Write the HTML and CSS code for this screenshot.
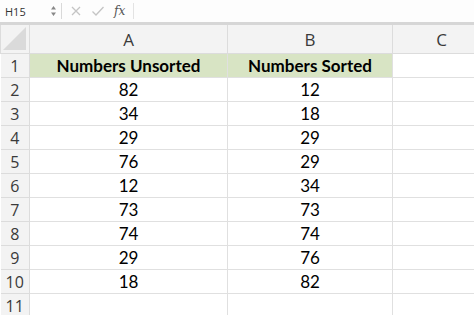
FILE: index.html
```html
<!DOCTYPE html>
<html lang="en">
<head>
  <meta charset="UTF-8" />
  <title>Numbers Sorted</title>
  <link rel="stylesheet" href="styles.css">
</head>
<body>
  <!-- Formula bar -->
  <div class="formula-bar">
    <div class="name-box">
      <span class="cell-ref">H15</span>
      <span class="spinner">
        <svg width="7" height="12" viewBox="0 0 7 12"><path d="M3.5 1 L6 4.5 H1 Z M3.5 11 L6 7.5 H1 Z" fill="#888"/></svg>
      </span>
    </div>
    <div class="fx-tools">
      <svg width="12" height="12" viewBox="0 0 12 12"><path d="M2 2 L10 10 M10 2 L2 10" stroke="#c4c4c4" stroke-width="1.3"/></svg>
      <svg width="14" height="12" viewBox="0 0 14 12"><path d="M1.5 6.5 L5 10 L12.5 2" stroke="#c4c4c4" stroke-width="1.3" fill="none"/></svg>
      <span class="fx">fx</span>
    </div>
    <div class="formula-input"></div>
  </div>

  <!-- Sheet grid -->
  <table class="sheet">
    <colgroup>
      <col class="col-head">
      <col class="col-a">
      <col class="col-b">
      <col class="col-c">
    </colgroup>
    <tr class="col-labels">
      <th class="corner"><span class="corner-tri"></span></th>
      <th>A</th>
      <th>B</th>
      <th>C</th>
    </tr>
    <tr>
      <th class="row-num">1</th>
      <td class="title">Numbers Unsorted</td>
      <td class="title">Numbers Sorted</td>
      <td></td>
    </tr>
    <tr><th class="row-num">2</th><td>82</td><td>12</td><td></td></tr>
    <tr><th class="row-num">3</th><td>34</td><td>18</td><td></td></tr>
    <tr><th class="row-num">4</th><td>29</td><td>29</td><td></td></tr>
    <tr><th class="row-num">5</th><td>76</td><td>29</td><td></td></tr>
    <tr><th class="row-num">6</th><td>12</td><td>34</td><td></td></tr>
    <tr><th class="row-num">7</th><td>73</td><td>73</td><td></td></tr>
    <tr><th class="row-num">8</th><td>74</td><td>74</td><td></td></tr>
    <tr><th class="row-num">9</th><td>29</td><td>76</td><td></td></tr>
    <tr><th class="row-num">10</th><td>18</td><td>82</td><td></td></tr>
    <tr><th class="row-num">11</th><td></td><td></td><td></td></tr>
  </table>
</body>
</html>
```

FILE: styles.css
```css
/* Basic Reset */
body {
  margin: 0;
  padding: 0;
  width: 474px;
  height: 315px;
  overflow: hidden;
  background: #fff;
  font-family: "Lato", "Open Sans", sans-serif;
}

/* Formula bar across the top */
.formula-bar {
  display: flex;
  align-items: center;
  height: 22px;
  background: #fdfdfd;
  border-bottom: 3px solid #d6d6d6;
}

.name-box {
  display: flex;
  align-items: center;
  justify-content: space-between;
  width: 56px;
  padding-left: 5px;
  height: 16px;
  border-right: 1px solid #d9d9d9;
}

.cell-ref {
  font-family: "Open Sans", sans-serif;
  font-size: 11px;
  color: #333;
}

.spinner {
  display: flex;
  margin-right: 4px;
}

.fx-tools {
  display: flex;
  align-items: center;
  gap: 9px;
  padding-left: 8px;
  padding-right: 8px;
  height: 16px;
  border-right: 1px solid #e3e3e3;
}

.fx {
  font-family: "DejaVu Serif", serif;
  font-style: italic;
  font-size: 12px;
  color: #555;
}

.formula-input {
  flex: 1;
}

/* Spreadsheet table */
.sheet {
  border-collapse: collapse;
  table-layout: fixed;
  width: 490px;
}

.col-head { width: 29px; }
.col-a { width: 198px; }
.col-b { width: 165px; }
.col-c { width: 98px; }

.sheet th,
.sheet td {
  border: 1px solid #e0e0e0;
  padding: 0;
  height: 23px;
  text-align: center;
  font-size: 17px;
  color: #000;
  font-weight: normal;
}

.col-labels th {
  height: 28px;
  background: #f3f3f3;
  color: #3a3a3a;
  font-family: "Open Sans", sans-serif;
  font-size: 17px;
  border-top: none;
  border-color: #dcdcdc;
}

.sheet .corner {
  position: relative;
  background: #f3f3f3;
}

/* Grey triangle in the corner cell */
.corner-tri {
  position: absolute;
  right: 3px;
  bottom: 3px;
  width: 0;
  height: 0;
  border-left: 23px solid transparent;
  border-bottom: 23px solid #dadada;
}

.sheet .row-num {
  background: #f3f3f3;
  color: #3a3a3a;
  font-family: "Open Sans", sans-serif;
  font-size: 16px;
  border-left: none;
  border-color: #dcdcdc;
}

.sheet td.title {
  background: #d8e4c4;
  font-weight: bold;
}
```
